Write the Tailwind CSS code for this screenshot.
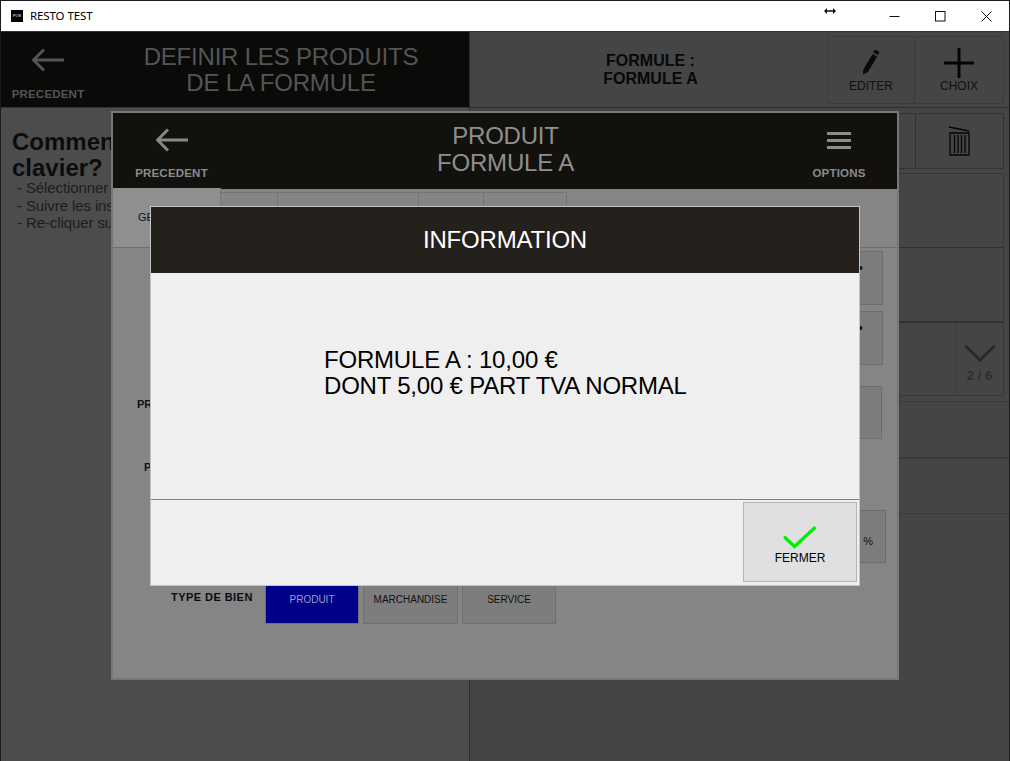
<!DOCTYPE html>
<html lang="fr">
<head>
  <meta charset="UTF-8" />
  <title>RESTO TEST</title>
  <script src="https://cdn.jsdelivr.net/npm/@tailwindcss/browser@4"></script>
</head>
<body class="font-['Liberation_Sans',Arial,sans-serif] bg-white">
  <div class="relative w-[1010px] h-[761px] overflow-hidden border border-[#1c1c1c] border-b-0 flex flex-col">

    <!-- title bar -->
    <div class="h-[30px] bg-white flex items-center shrink-0 relative">
      <div class="ml-[10px] w-3 h-3 bg-black flex items-center justify-center text-[4px] text-white">POS</div>
      <span class="ml-[7px] text-[11.5px] tracking-[-0.1px] text-black font-['Noto_Sans',sans-serif]">RESTO TEST</span>
      <svg class="absolute left-[823px] top-[6px]" width="12" height="8" viewBox="0 0 12 8"><path d="M0 4l3-3v6zM12 4l-3-3v6zM3 3.300h6v1.400H3z" fill="#111"/></svg>
      <div class="ml-auto flex h-full">
        <div class="w-[46px] flex items-center justify-center -translate-x-[2px]"><svg width="11" height="11" viewBox="0 0 11 11"><path d="M0.500 5.500h10" stroke="#111" fill="none"/></svg></div>
        <div class="w-[45px] flex items-center justify-center -translate-x-[1px]"><svg width="11" height="11" viewBox="0 0 11 11"><rect x="0.500" y="0.500" width="9.500" height="9.500" stroke="#111" fill="none"/></svg></div>
        <div class="w-[45px] flex items-center justify-center"><svg width="11" height="11" viewBox="0 0 11 11"><path d="M0.500 0.500l10 10M10.500 0.500l-10 10" stroke="#111" fill="none"/></svg></div>
      </div>
    </div>

    <!-- background screen -->
    <div class="flex-1 flex bg-[#454545] min-h-0 border-t border-[#333]">
      <div class="w-[469px] shrink-0 border-r border-[#2c2c2c] bg-[#4c4c4c]">
        <div class="h-[76px] bg-[#0a0a09] flex border-b border-[#333]">
          <div class="w-[94px] shrink-0 flex flex-col items-center pt-[16px]">
            <svg width="32" height="24" viewBox="0 0 32 24"><path d="M32 12H2M12 1.500L1.500 12 12 22.500" stroke="#555" stroke-width="3" fill="none"/></svg>
            <span class="mt-[14px] text-[11.5px] tracking-[0.2px] font-bold text-[#555]">PRECEDENT</span>
          </div>
          <div class="flex-1 text-center text-[24px] tracking-[-0.2px] leading-[26px] text-[#555] pt-[12px] pr-[2px]">DEFINIR LES PRODUITS<br>DE LA FORMULE</div>
        </div>
        <div class="pl-[11px] pt-[21px]">
          <h2 class="text-[24px] leading-[26px] font-bold text-[#0c0c0c]">Comment utiliser le<br>clavier?</h2>
          <ul class="pl-[5px] text-[15px] tracking-[-0.1px] leading-[17.500px] text-[#1d1d1d] mt-[-2px]">
            <li>- Sélectionner le champ</li>
            <li>- Suivre les instructions</li>
            <li>- Re-cliquer sur le champ</li>
          </ul>
        </div>
      </div>

      <div class="flex-1 flex flex-col">
        <div class="h-[76px] flex items-center border-b border-[#303030] pr-[5px]">
          <div class="flex-1 text-center text-[16px] leading-[18px] font-bold text-[#080808] pl-[4px]">FORMULE :<br>FORMULE A</div>
          <div class="flex h-[68px] border border-[#3b3b3b]">
            <div class="w-[87px] border-r border-[#3b3b3b] flex flex-col items-center pt-[11px]">
              <svg width="20" height="27" viewBox="0 0 20 27"><path d="M14 1.500l4.500 2.500-1.600 3-4.600-2.500zM11.600 6l4.600 2.500L7 24l-5 2.500.3-5z" fill="#0a0a0a"/></svg>
              <span class="mt-[2px] text-[12px] text-[#111]">EDITER</span>
            </div>
            <div class="w-[88px] flex flex-col items-center pt-[10px]">
              <svg width="32" height="32" viewBox="0 0 32 32"><path d="M16 1v30M1 16h30" stroke="#050505" stroke-width="3" fill="none"/></svg>
              <span class="-mt-[2px] text-[12px] text-[#111]">CHOIX</span>
            </div>
          </div>
        </div>

        <div class="pl-[1px] pr-[5px] pt-[5px]">
          <div class="h-[56px] flex justify-end border border-[#333]">
            <div class="w-[88px] border-l border-[#333] flex items-center justify-center">
              <svg width="23" height="32" viewBox="0 0 23 32"><path d="M1 2l20 4" stroke="#050505" stroke-width="1.600" fill="none"/><path d="M2 8h19v22H2zM6.500 10v18M10 10v18M13.500 10v18M17 10v18" stroke="#050505" stroke-width="1.300" fill="none"/></svg>
            </div>
          </div>
          <div class="mt-[4px] h-[75px] border border-[#393939] border-b-[#303030]"></div>
          <div class="h-[75px] border-x border-[#393939] border-b-2 border-b-[#303030]"></div>
          <div class="h-[73px] flex justify-end border-x border-b border-[#393939]">
            <div class="w-[48px] border-l border-[#3e3e3e] flex flex-col items-center pt-[21px]">
              <svg width="32" height="18" viewBox="0 0 32 18"><path d="M1 1.500l15 14.500L31 1.500" stroke="#2a2a2a" stroke-width="3" fill="none"/></svg>
              <span class="mt-[4px] text-[13px] font-bold text-[#2e2e2e]">2 / 6</span>
            </div>
          </div>
        </div>
        <div class="mt-[5px] h-[56px] border-t border-[#393939]"></div>
        <div class="h-[56px] border-t-2 border-[#393939]"></div>
        <div class="border-t border-[#393939]"></div>
      </div>
    </div>

    <!-- produit modal -->
    <div class="absolute left-[110px] top-[110px] w-[788px] h-[569px] bg-[#858585] border-2 border-[#777] flex flex-col">
      <div class="h-[76px] bg-[#12110e] shrink-0 flex justify-between">
        <div class="w-[117px] flex flex-col items-center pt-[15px]">
          <svg width="32" height="24" viewBox="0 0 32 24"><path d="M32 12H2M12 1.500L1.500 12 12 22.500" stroke="#888" stroke-width="3" fill="none"/></svg>
          <span class="mt-[13px] text-[11.500px] tracking-[0.2px] font-bold text-[#8b8b8b]">PRECEDENT</span>
        </div>
        <div class="flex-1 text-center text-[24px] tracking-[-0.2px] leading-[27px] text-[#8f8f8f] pt-[9px] pl-[2px]">PRODUIT<br>FORMULE A</div>
        <div class="w-[118px] flex flex-col items-center pt-[19px]">
          <div class="w-[24px] h-[17px] flex flex-col justify-between translate-x-[1px]">
            <div class="h-[3px] bg-[#8c8c8c]"></div><div class="h-[3px] bg-[#8c8c8c]"></div><div class="h-[3px] bg-[#8c8c8c]"></div>
          </div>
          <span class="mt-[16px] text-[11.500px] tracking-[0.2px] font-bold text-[#8b8b8b] translate-x-[1px]">OPTIONS</span>
        </div>
      </div>
      <div class="h-[59px] shrink-0 flex items-end border-b border-[#6f6f6f] text-[11px] text-[#111]">
        <div class="w-[108px] h-[59px] bg-[#8f8f8f] border-r border-[#777] flex items-center pl-[25px]">GENERAL</div>
        <div class="w-[57px] h-[55px] bg-[#858585] border border-l-0 border-[#747474]"></div>
        <div class="w-[141px] h-[55px] bg-[#858585] border border-l-0 border-[#747474]"></div>
        <div class="w-[65px] h-[55px] bg-[#858585] border border-l-0 border-[#747474]"></div>
        <div class="w-[83px] h-[55px] bg-[#858585] border border-l-0 border-[#747474]"></div>
      </div>
      <div class="flex-1 relative flex flex-col">
        <div class="flex flex-col items-end pr-[14px]">
          <div class="mt-[3px] w-[100px] h-[54px] bg-[#7c7c7c] border border-[#6d6d6d] flex justify-end pt-[6px] text-[14px] text-[#111]"><span class="absolute right-[34px]">•</span></div>
          <div class="mt-[6px] w-[100px] h-[54px] bg-[#7c7c7c] border border-[#6d6d6d] flex justify-end pt-[6px] text-[14px] text-[#111]"><span class="absolute right-[34px]">•</span></div>
          <div class="mt-[21px] w-[100px] h-[53px] bg-[#7c7c7c] border border-[#6d6d6d] -translate-x-[1px] flex justify-end pt-[4px] text-[12px] text-[#444]"><span class="absolute right-[34px]">•</span></div>
          <div class="mt-[71px] w-[100px] h-[53px] bg-[#7c7c7c] border border-[#6d6d6d] translate-x-[3px] flex items-start justify-end pr-[12px] pt-[22px] text-[11px] text-[#111]">0 %</div>
        </div>
        <div class="absolute left-[24px] top-[148px] text-[11px] font-bold text-[#111]">PRIX</div>
        <div class="absolute left-[31px] top-[211px] text-[11px] font-bold text-[#111]">PRIX</div>
        <div class="absolute left-0 top-[327px] w-full flex items-start">
          <span class="ml-[58px] w-[94px] mt-[14px] text-[11px] font-bold tracking-[0.45px] text-[#0c0c0c]">TYPE DE BIEN</span>
          <div class="w-[94px] h-[49px] bg-[#000088] border border-[#6f6f6f] flex items-start justify-center pt-[16px] text-[10px] text-[#9d9dcc]">PRODUIT</div>
          <div class="ml-[4px] w-[95px] h-[49px] bg-[#7d7d7d] border border-[#6f6f6f] flex items-start justify-center pt-[16px] text-[10px] text-[#111]">MARCHANDISE</div>
          <div class="ml-[4px] w-[94px] h-[49px] bg-[#7d7d7d] border border-[#6f6f6f] flex items-start justify-center pt-[16px] text-[10px] text-[#111]">SERVICE</div>
        </div>
      </div>
    </div>

    <!-- information modal -->
    <div class="absolute left-[149px] top-[205px] w-[710px] h-[380px] bg-[#efefef] border border-[#c4c4c4] flex flex-col">
      <div class="h-[66px] bg-[#24201b] shrink-0 flex items-center justify-center text-[24px] tracking-[-0.2px] text-white">INFORMATION</div>
      <div class="h-[227px] shrink-0 border-b border-[#7f7f7f] pl-[173px] pt-[74px] text-[24px] tracking-[-0.2px] leading-[26px] text-black">FORMULE A : 10,00 €<br>DONT 5,00 € PART TVA NORMAL</div>
      <div class="flex-1 flex justify-end items-start pt-[2px] pr-[2px]">
        <div class="w-[114px] h-[80px] bg-[#e0e0e0] border border-[#b4b4b4] flex flex-col items-center pt-[23px]">
          <svg width="34" height="24" viewBox="0 0 34 24"><path d="M2 11.500l9.500 9L31.500 2" stroke="#00ee00" stroke-width="3.200" fill="none" stroke-linecap="round"/></svg>
          <span class="text-[12px] text-black -mt-[1px]">FERMER</span>
        </div>
      </div>
    </div>
  </div>
</body>
</html>
